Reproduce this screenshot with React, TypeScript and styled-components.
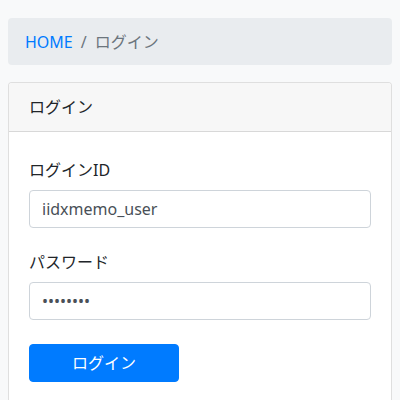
import React from "react";
import styled, { createGlobalStyle } from "styled-components";

const Global = createGlobalStyle`
  html, body { margin: 0; padding: 0; background: #f8f9fa; }
  body {
    font-family: "Segoe UI", "Noto Sans", "Noto Sans CJK JP", sans-serif;
    font-size: 16px;
    line-height: 1.5;
    color: #212529;
  }
  * { box-sizing: border-box; }
`;

const Page = styled.div`
  padding: 18px 8px 0;
`;

const Breadcrumb = styled.nav`
  display: flex;
  align-items: center;
  height: 47px;
  padding: 0 17px;
  background: #e9ecef;
  border-radius: 4px;
  margin-bottom: 17px;
`;

const Crumb = styled.a`
  color: #007bff;
  text-decoration: none;
`;

const Sep = styled.span`
  color: #6c757d;
  padding: 0 8px;
`;

const Current = styled.span`
  color: #6c757d;
`;

const Card = styled.section`
  background: #fff;
  border: 1px solid rgba(0, 0, 0, 0.125);
  border-radius: 4px;
  overflow: hidden;
`;

const CardHeader = styled.header`
  display: flex;
  align-items: center;
  height: 49px;
  padding: 0 20px;
  background: #f7f7f7;
  border-bottom: 1px solid rgba(0, 0, 0, 0.125);
`;

const CardBody = styled.form`
  display: flex;
  flex-direction: column;
  padding: 26px 20px 40px;
`;

const Group = styled.div`
  display: flex;
  flex-direction: column;
  margin-bottom: 22px;
`;

const Label = styled.label`
  display: block;
  line-height: 24px;
  margin-bottom: 8px;
`;

const Input = styled.input`
  display: block;
  width: 100%;
  height: 38px;
  padding: 6px 12px;
  font: inherit;
  color: #495057;
  background: #fff;
  border: 1px solid #ced4da;
  border-radius: 4px;
  outline: none;
`;

const Button = styled.button`
  width: 150px;
  height: 38px;
  margin-top: 2px;
  font: inherit;
  color: #fff;
  background: #007bff;
  border: 1px solid #007bff;
  border-radius: 4px;
  cursor: pointer;
`;

export default function App() {
  return (
    <>
      <Global />
      <Page>
        <Breadcrumb>
          <Crumb href="#">HOME</Crumb>
          <Sep>/</Sep>
          <Current>ログイン</Current>
        </Breadcrumb>
        <Card>
          <CardHeader>ログイン</CardHeader>
          <CardBody onSubmit={(e) => e.preventDefault()}>
            <Group>
              <Label htmlFor="loginId">ログインID</Label>
              <Input id="loginId" type="text" defaultValue="iidxmemo_user" />
            </Group>
            <Group>
              <Label htmlFor="password">パスワード</Label>
              <Input id="password" type="password" defaultValue="password" />
            </Group>
            <div>
              <Button type="submit">ログイン</Button>
            </div>
          </CardBody>
        </Card>
      </Page>
    </>
  );
}
